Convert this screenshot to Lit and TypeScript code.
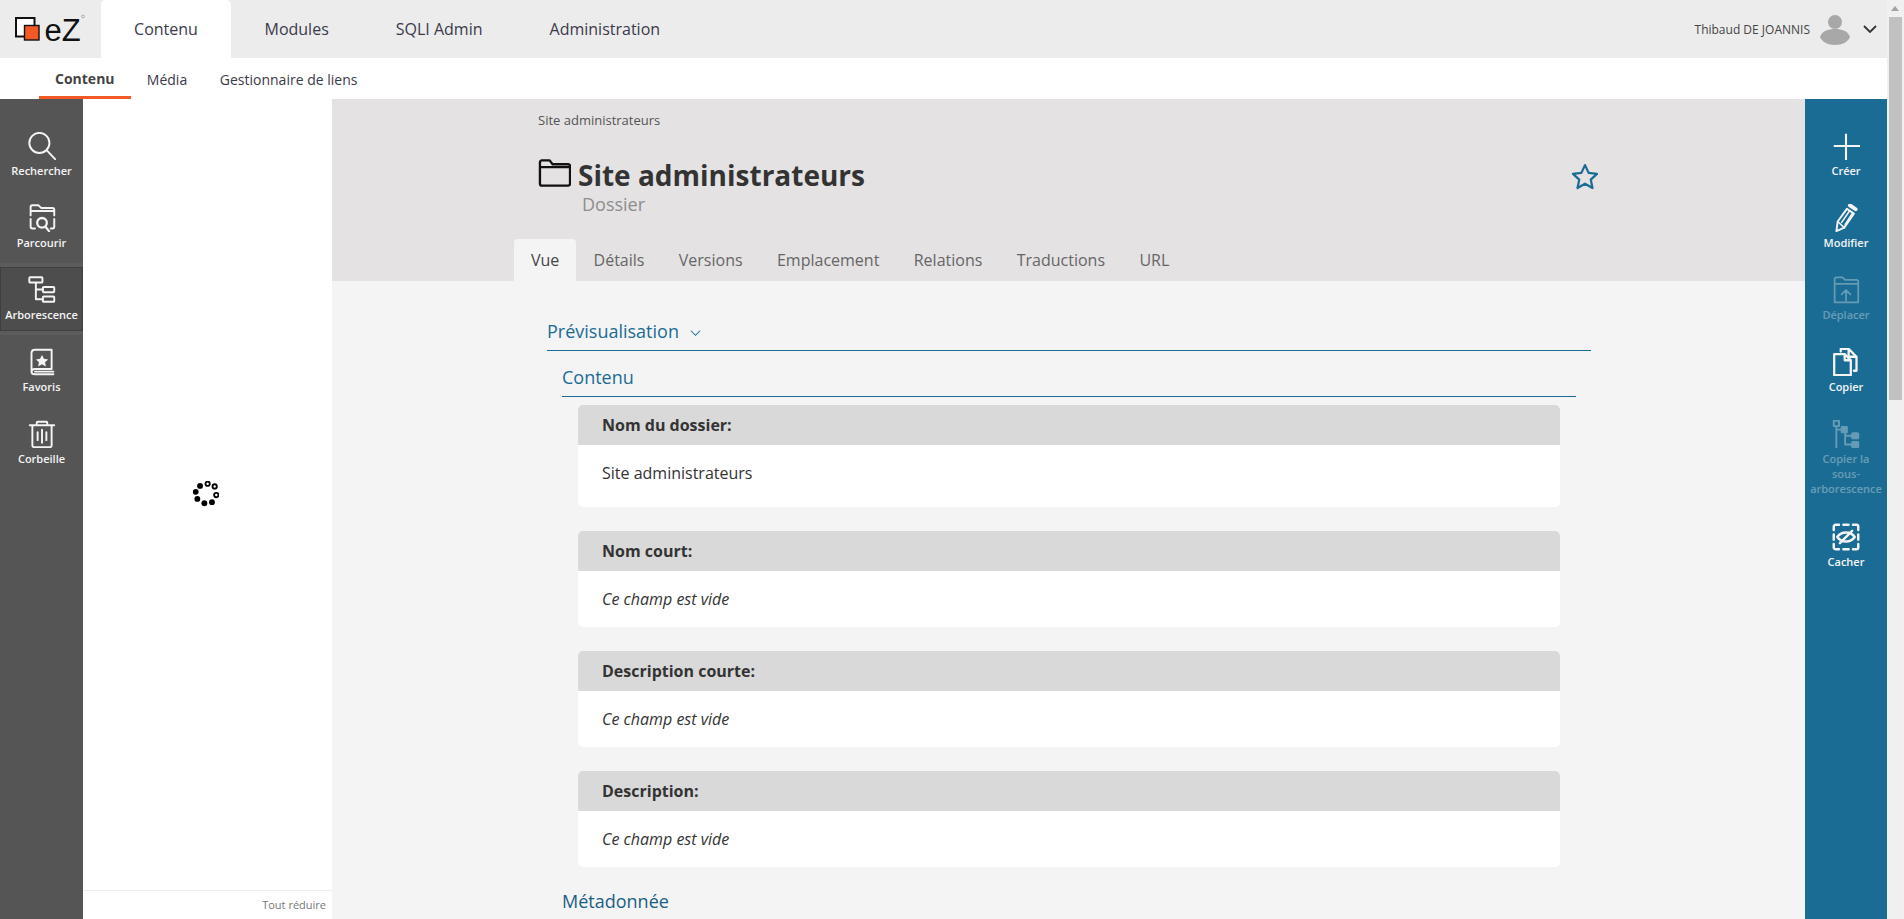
import { LitElement, html, css, svg } from "lit";
import { customElement } from "lit/decorators.js";

const ico = (body: unknown, vb = "0 0 32 32") => html`<svg class="ico" viewBox=${vb} fill="none" stroke="currentColor" stroke-width="2.200" stroke-linejoin="round" stroke-linecap="round">${body}</svg>`;

const icons: Record<string, unknown> = {
  search: svg`<circle cx="13" cy="12.500" r="11.500"/><path d="M21.500 21l9.500 10" />`,
  browse: svg`<path d="M3 13V3.500C3 2 4 1.500 5 1.500h7l3 3h13c1.500 0 2 1 2 2V13M3 8h27M3 17v9c0 1 .5 2 2 2h3M30 17v9c0 1-.5 2-2 2h-2"/><circle cx="16" cy="21.500" r="5.500" stroke-width="2.600"/><path d="M20 26l4 5" stroke-width="2.600"/>`,
  tree: svg`<rect x="1.500" y="1.500" width="15" height="6" rx="1"/><rect x="17" y="12.500" width="13" height="6" rx="1"/><rect x="17" y="23.500" width="13" height="6" rx="1"/><path d="M9 8v18.500h8M9 15.500h8"/>`,
  fav: svg`<path d="M27 2H8C5 2 4 4 4 6v21c0 2 1 3 4 3h21M27 2v22H8c-3 0-4 1-4 3M8 27h21"/><path d="M16 8l2.200 4.400 4.800.6-3.500 3.300.9 4.700-4.400-2.300-4.400 2.300.9-4.700L9 13l4.800-.6z" fill="currentColor" stroke="none"/>`,
  trash: svg`<path d="M2 6h28M10 6V3c0-.6.5-1 1-1h10c.5 0 1 .4 1 1v3M5 6v23c0 1 .6 2 2 2h18c1.400 0 2-1 2-2V6"/><path d="M16 11v15M11 14v9M21 14v9"/>`,
  plus: svg`<path d="M16 2v30M2 16h30" stroke-width="2.400" stroke-linecap="butt"/>`,
  edit: svg`<path d="M20.500 1.500l6.500 4.500" stroke-width="4.500"/><path d="M5 31l1.500-11L17 5.500l8 5.500L14 27z"/><path d="M6.500 20L14 27M11 21l9-13M15 23.500L23 11" stroke-width="1.800"/>`,
  move: svg`<path d="M3 13V3.500C3 2 4 1.500 5 1.500h7l3 3h13c1.500 0 2 1 2 2V30H3V13zM3 9h27M16 28V17M11 21l5-5 5 5" stroke-width="2"/>`,
  copy: svg`<path d="M2.500 7h12l7 7v17h-19zM14.500 7v7h7" stroke-width="2.600"/><path d="M10 4V1h9l9 9v16h-3M19 1v9h9" stroke-width="2.600"/>`,
  subtree: svg`<rect x="2" y="1" width="6" height="6"/><rect x="11" y="8" width="6" height="6" fill="currentColor"/><rect x="23" y="15" width="7" height="6" rx="1" fill="currentColor"/><rect x="23" y="25" width="7" height="6" rx="1" fill="currentColor"/><path d="M5 7v25M5 11h6M15 14v14h8M15 18h8"/>`,
  hide: svg`<path d="M2 8V4c0-1 1-2 2-2h4M13 2h6M24 2h4c1 0 2 1 2 2v4M30 13v6M30 24v4c0 1-1 2-2 2h-4M19 30h-6M8 30H4c-1 0-2-1-2-2v-4M2 19v-6" stroke-width="2.800"/><path d="M6 16c5-7 15-7 20 0-5 7-15 7-20 0zM9 23L23 9" stroke-width="2.800"/>`,
};

const chevron = svg`<path d="M1 1l6 6 6-6"/>`;

@customElement("app-root")
export class AppRoot extends LitElement {
  static styles = css`
    :host { display: block; height: 919px; overflow: hidden; font-family: "Open Sans", "Noto Sans", sans-serif; color: #333; position: relative; background: #fff; }
    .page { width: 1887px; height: 919px; display: flex; flex-direction: column; }
    .top { height: 58px; background: #ececec; display: flex; flex: none; }
    .logo { width: 101px; display: flex; align-items: flex-start; padding: 10px 0 0 12px; box-sizing: border-box; flex: none; }
    .logo svg { width: 76px; height: 38px; overflow: visible; }
    .logotext { font-family: "Liberation Sans", sans-serif; font-size: 31px; fill: #111; }
    .mtab { font-size: 16px; height: 58px; display: flex; align-items: center; padding: 0 33.500px; color: #3a3a4a; }
    .mtab.on { background: #fff; border-radius: 5px 5px 0 0; width: 130px; padding: 0; justify-content: center; }
    .user { margin-left: auto; display: flex; align-items: center; font-size: 12px; color: #444; padding-right: 10px; }
    .user svg.av { width: 32px; height: 32px; margin-left: 9px; margin-right: 12px; }
    .user svg.ch { width: 14px; height: 8px; fill: none; stroke: #333; stroke-width: 1.800; }
    .sub { height: 41px; display: flex; flex: none; padding-left: 39px; }
    .stab { font-size: 14px; height: 41px; box-sizing: border-box; padding: 2px 16.300px 0; display: flex; align-items: center; color: #3a3a4a; }
    .stab.on { font-weight: 700; border-bottom: 3px solid #f15a24; padding: 3px 16px 0; color: #444; }
    .main { flex: 1; display: flex; min-height: 0; }
    .side { width: 83px; flex: none; background: #555; display: flex; flex-direction: column; color: #fff; }
    .rside { width: 82px; background: #1a6c94; }
    .item { height: 72px; flex: none; display: flex; flex-direction: column; align-items: center; box-sizing: border-box; padding-top: 35px; font-size: 11px; line-height: 15px; font-weight: 600; position: relative; text-align: center; color: #f4f4f4; }
    .item .ico { position: absolute; top: 4px; width: 28px; height: 28px; left: 50%; margin-left: -14px; }
    .side .list { padding-top: 29px; display: flex; flex-direction: column; }
    .item.on { background: #4d4d4d; border: 1px solid #3f3f3f; box-shadow: 0 -4px 0 #5c5c5c, 0 4px 0 #5c5c5c; height: 64px; margin: -5px 0 13px; padding-top: 39px; }
    .item.on .ico { top: 8px; }
    .item.off { opacity: .35; }
    .item.tall { height: 103px; padding-left: 4px; padding-right: 4px; }
    .tree { width: 249px; flex: none; display: flex; flex-direction: column; position: relative; }
    .spin-wrap { flex: 1; display: flex; align-items: center; justify-content: center; padding: 0 3px 1px 0; }
    .spin { width: 26px; height: 26px; }
    .collapse { height: 29px; border-top: 1px solid #eee; font-size: 11px; color: #777; text-align: right; padding: 6px 6px 0 0; box-sizing: border-box; flex: none; line-height: 16px; }
    .content { flex: 1; background: #f4f4f4; min-width: 0; overflow: hidden; }
    .head { background: #e4e2e3; height: 182px; padding: 11px 0 0 206px; box-sizing: border-box; display: flex; flex-direction: column; }
    .crumb { font-size: 13px; line-height: 20px; color: #555; }
    .titlerow { display: flex; align-items: center; margin-top: 27px; height: 36px; position: relative; }
    .titlerow .folder { width: 33px; height: 30px; color: #111; margin: -4px 7px 0 0; }
    h1 { font-size: 28px; font-weight: 700; color: #333; margin: 0; line-height: 36px; }
    .star { width: 30px; height: 30px; margin-left: auto; margin-right: 205px; margin-top: 4px; color: #1a6c94; }
    .type { font-size: 18px; color: #8e8e8e; padding-left: 44px; line-height: 24px; margin-top: -1px; }
    .tabs { display: flex; margin: auto 0 0 -24px; height: 42px; }
    .tab { font-size: 16px; color: #666; padding: 0 17.200px; display: flex; align-items: center; }
    .tab.on { background: #f4f4f4; border-radius: 4px 4px 0 0; color: #444; padding: 0 17px; }
    .body { padding: 35px 214px 0 215px; }
    .prev { color: #1a6c94; font-size: 18px; line-height: 31px; padding-bottom: 3px; border-bottom: 1px solid #1a6c94; display: flex; align-items: center; }
    .prev svg { width: 11px; height: 6px; fill: none; stroke: #1a6c94; stroke-width: 1.400; margin-left: 11px; margin-top: 3px; }
    .inner { padding: 0 15px; }
    h2 { font-size: 18px; font-weight: 400; color: #1a6c94; margin: 10px 0 0; line-height: 32px; padding-bottom: 3px; border-bottom: 1px solid #1a6c94; }
    .cards { padding: 8px 16px 0; }
    .card { background: #fff; border-radius: 5px; margin-bottom: 24px; overflow: hidden; }
    .card .h { background: #d9d9d9; height: 40px; font-size: 16px; font-weight: 700; line-height: 40px; padding-left: 24px; color: #333; }
    .card .b { font-size: 16px; height: 56px; line-height: 56px; padding-left: 24px; color: #333; }
    .card.first .b { height: 62px; }
    .card .b.e { font-style: italic; }
    h2.meta { border: 0; margin-top: -6px; color: #1a5f85; }
    .sb { position: absolute; right: 0; top: 0; bottom: 0; width: 17px; background: #f0f0f0; }
    .sb .arrow { position: absolute; top: 6px; left: 4px; width: 0; height: 0; border-left: 4px solid transparent; border-right: 4px solid transparent; border-bottom: 5px solid #a3a3a3; }
    .sb .thumb { position: absolute; top: 17px; left: 2px; width: 13px; height: 383px; background: #c1c1c1; }
  `;

  private nav(label: string, key: string, cls = "") {
    return html`<div class="item ${cls}">${ico(icons[key])}<span>${label}</span></div>`;
  }

  private spinner() {
    const s = [[6.500, 4.500, 1], [13.500, 2.500, 0], [20, 5, 0], [21.500, 13, 0], [17.500, 19.500, 1], [10.500, 20.500, 1], [4, 16.500, 1], [2.500, 10, 1]] as const;
    return html`<svg class="spin" viewBox="0 0 24 24">${s.map(([x, y, f]) =>
      f ? svg`<circle cx=${x} cy=${y} r="2.700" fill="#000"/>` : svg`<circle cx=${x} cy=${y} r="2" fill="#fff" stroke="#000" stroke-width="1.700"/>`)}</svg>`;
  }

  render() {
    return html`
      <div class="page">
        <div class="top">
          <div class="logo">
            <svg viewBox="12 10 76 38">
              <rect x="16" y="18" width="18.500" height="18.500" fill="#fff" stroke="#111" stroke-width="2"/>
              <rect x="24.500" y="25.500" width="14.500" height="14.500" fill="#f15a24" stroke="#111" stroke-width="1.400"/>
              <text class="logotext" x="44.500" y="41">eZ</text>
              <circle cx="83" cy="16.500" r="1.400" fill="none" stroke="#888" stroke-width=".6"/>
            </svg>
          </div>
          <div class="mtab on">Contenu</div>
          <div class="mtab">Modules</div>
          <div class="mtab">SQLI Admin</div>
          <div class="mtab">Administration</div>
          <div class="user">
            <span>Thibaud DE JOANNIS</span>
            <svg class="av" viewBox="0 0 32 32" fill="#a8a8a8"><circle cx="16" cy="9" r="7"/><path d="M1 24c2-6 8-8 15-8s13 2 15 8c-2 5-8 8-15 8S3 29 1 24z"/></svg>
            <svg class="ch" viewBox="0 0 14 8">${chevron}</svg>
          </div>
        </div>
        <div class="sub">
          <div class="stab on">Contenu</div>
          <div class="stab">Média</div>
          <div class="stab">Gestionnaire de liens</div>
        </div>
        <div class="main">
          <div class="side">
            <div class="list">
              ${this.nav("Rechercher", "search")}
              ${this.nav("Parcourir", "browse")}
              ${this.nav("Arborescence", "tree", "on")}
              ${this.nav("Favoris", "fav")}
              ${this.nav("Corbeille", "trash")}
            </div>
          </div>
          <div class="tree">
            <div class="spin-wrap">${this.spinner()}</div>
            <div class="collapse">Tout réduire</div>
          </div>
          <div class="content">
            <div class="head">
              <div class="crumb">Site administrateurs</div>
              <div class="titlerow">
                <svg class="folder" viewBox="0 0 34 30" fill="none" stroke="currentColor" stroke-width="2.400" stroke-linejoin="round"><path d="M2 26V4c0-1 .8-2 2-2h8l3 4h16c1 0 2 .8 2 2v18c0 1-1 2-2 2H4c-1.200 0-2-1-2-2zM2 9h31"/></svg>
                <h1>Site administrateurs</h1>
                <svg class="star" viewBox="0 0 24 24" fill="none" stroke="currentColor" stroke-width="1.800" stroke-linejoin="round"><path d="M12 2.500l2.900 6.200 6.700.8-5 4.600 1.400 6.700-6-3.400-6 3.400 1.400-6.700-5-4.600 6.700-.8z"/></svg>
              </div>
              <div class="type">Dossier</div>
              <div class="tabs">
                <div class="tab on">Vue</div>
                <div class="tab">Détails</div>
                <div class="tab">Versions</div>
                <div class="tab">Emplacement</div>
                <div class="tab">Relations</div>
                <div class="tab">Traductions</div>
                <div class="tab">URL</div>
              </div>
            </div>
            <div class="body">
              <div class="prev">Prévisualisation <svg viewBox="0 0 14 8">${chevron}</svg></div>
              <div class="inner">
                <h2>Contenu</h2>
                <div class="cards">
                  <div class="card first"><div class="h">Nom du dossier:</div><div class="b">Site administrateurs</div></div>
                  <div class="card"><div class="h">Nom court:</div><div class="b e">Ce champ est vide</div></div>
                  <div class="card"><div class="h">Description courte:</div><div class="b e">Ce champ est vide</div></div>
                  <div class="card"><div class="h">Description:</div><div class="b e">Ce champ est vide</div></div>
                </div>
                <h2 class="meta">Métadonnée</h2>
              </div>
            </div>
          </div>
          <div class="side rside">
            <div class="list">
              ${this.nav("Créer", "plus")}
              ${this.nav("Modifier", "edit")}
              ${this.nav("Déplacer", "move", "off")}
              ${this.nav("Copier", "copy")}
              ${this.nav("Copier la sous-arborescence", "subtree", "off tall")}
              ${this.nav("Cacher", "hide")}
            </div>
          </div>
        </div>
      </div>
      <div class="sb"><div class="arrow"></div><div class="thumb"></div></div>
    `;
  }
}
